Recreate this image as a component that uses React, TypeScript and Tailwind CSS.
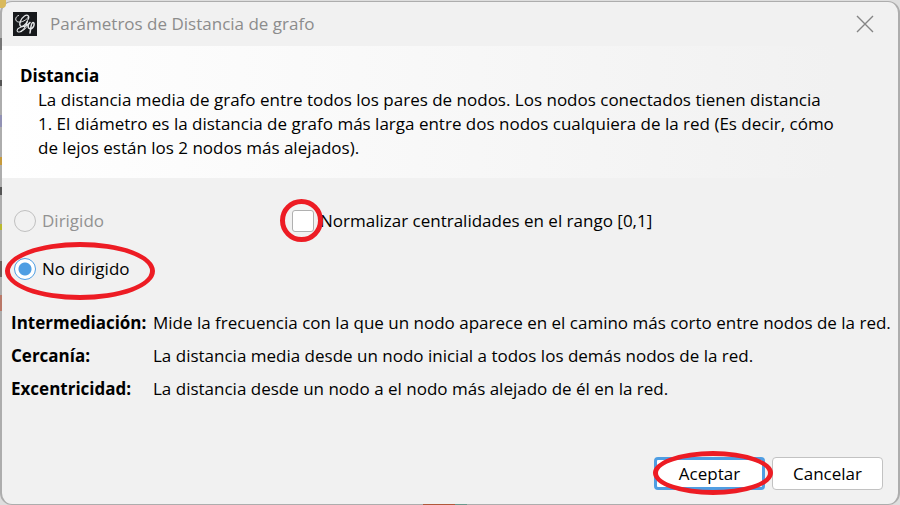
import React from "react";

type RingProps = { className: string };

function Ring({ className }: RingProps) {
  return (
    <span
      aria-hidden="true"
      className={`pointer-events-none absolute rounded-[50%] border-[5px] border-[#ed1c24] ${className}`}
    />
  );
}

function GephiLogo() {
  return (
    <svg width="24" height="24" viewBox="0 0 24 24" fill="none" stroke="#e4e6e8" strokeLinecap="round" aria-hidden="true">
      <rect width="24" height="24" fill="#17191c" stroke="none" />
      <path d="M15 7.500C17 4 14.500 2 11.500 4C8 6.500 5.500 12 7.500 14C9.500 15.500 13 12.500 14.500 9" strokeWidth="1.300" />
      <path d="M5.500 3.500C2 4.500 1.500 9.500 5.500 10C9 10.500 13.500 8 15 5.500" strokeWidth="1" />
      <path d="M14.500 9C13 14 10 19.500 6.500 20C3 20.300 3.500 16.500 7 15.500C10 14.500 13 14.500 15.500 12" strokeWidth="1.100" />
      <path d="M9 18.500C11.500 18.500 13 16.500 14.500 13.500" strokeWidth="0.800" />
      <path d="M17 10.500C14.500 12 14.500 16.500 17 16.800C20.500 17 22.500 11 20 10.500C18 10.500 18 15 17 21" strokeWidth="1.500" />
    </svg>
  );
}

/* Glimpses of the desktop behind the window's edges. */
const glimpses = [
  "left-0 top-0 h-2 w-1.5 rounded-br bg-[#d9b95c]",
  "left-0 top-[38px] h-3 w-0.5 bg-[#777777]",
  "left-0 top-20 h-1.5 w-0.5 bg-[#555555]",
  "left-0 top-[115px] h-3 w-0.5 bg-[#9292b4]",
  "left-0 top-[157px] h-2 w-0.5 bg-[#c69a3c]",
  "left-0 top-[187px] h-2 w-0.5 bg-[#555555]",
  "left-0 top-[224px] h-1.5 w-0.5 bg-[#b9b92e]",
  "left-0 top-[261px] h-4 w-0.5 bg-[#6b625e]",
  "left-0 top-[295px] h-4 w-0.5 bg-[#b97868]",
  "bottom-0 left-[423px] h-px w-8 bg-[#b0583a]",
  "bottom-0 left-[455px] h-px w-3 bg-[#6b978b]",
];

const definitions = [
  { term: "Intermediación:", text: "Mide la frecuencia con la que un nodo aparece en el camino más corto entre nodos de la red." },
  { term: "Cercanía:", text: "La distancia media desde un nodo inicial a todos los demás nodos de la red." },
  { term: "Excentricidad:", text: "La distancia desde un nodo a el nodo más alejado de él en la red." },
];

export default function App() {
  return (
    <div className="relative flex min-h-screen flex-col bg-[#dedede] pt-px font-['Open_Sans','Noto_Sans',sans-serif] text-[17px] leading-6 text-black">
      <main className="flex grow flex-col rounded-xl border border-x-2 border-[#adadad] bg-[#f1f1f1]">
        <header className="flex h-11 items-center gap-[13px] pr-6 pl-[11px]">
          <GephiLogo />
          <h1 className="grow text-[#8c8c8c]">Parámetros de Distancia de grafo</h1>
          <button type="button" aria-label="Cerrar" className="text-[#858585]">
            <svg width="18" height="18" viewBox="0 0 18 18" fill="none" stroke="currentColor" strokeWidth="1.4" aria-hidden="true">
              <path d="M1 1 17 17M17 1 1 17" />
            </svg>
          </button>
        </header>

        <section className="bg-linear-to-r from-white to-[#f1f1f1] to-93% px-[18px] py-[18px]">
          <h2 className="font-bold">Distancia</h2>
          <p className="pl-[18px]">
            La distancia media de grafo entre todos los pares de nodos. Los nodos conectados tienen distancia
            <br />
            1. El diámetro es la distancia de grafo más larga entre dos nodos cualquiera de la red (Es decir, cómo
            <br />
            de lejos están los 2 nodos más alejados).
          </p>
        </section>

        <section className="grid grid-cols-[278px_1fr] gap-y-6 pt-[31px] pl-3">
          <label className="flex items-center gap-1.5 text-[#929292]">
            <input type="radio" name="tipo" disabled className="size-[22px] appearance-none rounded-full border border-[#c0c0c0]" />
            Dirigido
          </label>
          <label className="relative flex items-center gap-1.5">
            <input type="checkbox" className="size-[22px] appearance-none rounded-[3px] border border-[#b0b0b0] bg-white" />
            Normalizar centralidades en el rango [0,1]
            <Ring className="-top-2.5 -left-3 size-[43px]" />
          </label>
          <label className="relative flex items-center gap-1.5">
            <input
              type="radio"
              name="tipo"
              defaultChecked
              className="size-[22px] appearance-none rounded-full border border-[#4f9ee3] bg-white bg-[radial-gradient(circle,#4f9ee3_6px,transparent_7px)]"
            />
            No dirigido
            <Ring className="-top-[15px] -left-[9px] h-[58px] w-[150px]" />
          </label>
        </section>

        <dl className="grid grid-cols-[142px_1fr] gap-y-[9px] pt-[30px] pl-[9px]">
          {definitions.map((item) => (
            <React.Fragment key={item.term}>
              <dt className="font-bold">{item.term}</dt>
              <dd className="whitespace-nowrap">{item.text}</dd>
            </React.Fragment>
          ))}
        </dl>

        <footer className="mt-auto flex justify-end gap-[7px] pr-[15px] pb-3.5">
          <div className="relative">
            <button type="button" className="h-[33px] w-[111px] rounded-[4px] border-3 border-[#4f9ee3] bg-white">
              Aceptar
            </button>
            <Ring className="-top-1.5 -left-px h-11 w-[120px]" />
          </div>
          <button type="button" className="h-[33px] w-[111px] rounded-[4px] border border-[#c2c2c2] bg-white">
            Cancelar
          </button>
        </footer>
      </main>
      {glimpses.map((place) => (
        <span key={place} aria-hidden="true" className={`absolute ${place}`} />
      ))}
    </div>
  );
}
